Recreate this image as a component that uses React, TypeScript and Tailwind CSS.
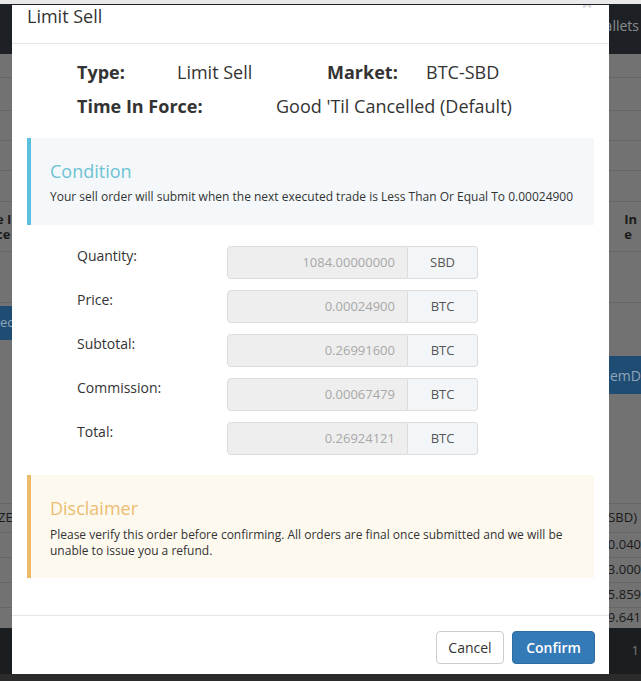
import React from "react";

const rows = [
  { label: "Quantity:", value: "1084.00000000", unit: "SBD" },
  { label: "Price:", value: "0.00024900", unit: "BTC" },
  { label: "Subtotal:", value: "0.26991600", unit: "BTC" },
  { label: "Commission:", value: "0.00067479", unit: "BTC" },
  { label: "Total:", value: "0.26924121", unit: "BTC" },
];

function BackgroundPage() {
  return (
    <div className="flex h-full w-full flex-col bg-[#727272] text-[13px] text-[#1a1a1a]">
      <div className="h-[4px] bg-[#e9e9e9]" />
      <div className="flex h-[51px] items-center justify-end bg-[#1d2126] pr-[2px] text-[14px] text-[#8a8d90]">
        <span className="mt-[-8px]">Wallets</span>
      </div>
      <div className="flex flex-1 flex-col">
        <div className="h-[24px] border-b border-[#666]" />
        <div className="h-[33px] border-b border-[#666]" />
        <div className="h-[30px] border-b border-[#666]" />
        <div className="h-[30px] border-b border-[#666]" />
        <div className="h-[31px] border-b border-[#666]" />
        <div className="flex h-[50px] items-center justify-between border-b border-[#666] font-bold leading-[15px]">
          <div className="ml-[-4px] flex flex-col">
            <span>e I</span>
            <span>ce</span>
          </div>
          <div className="mr-[4px] flex flex-col">
            <span>In</span>
            <span>e</span>
          </div>
        </div>
        <div className="h-[51px] border-b border-[#666]" />
        <div className="flex h-[40px] items-center justify-between">
          <span className="flex h-[34px] w-[14px] items-center overflow-hidden bg-[#1f4c72] text-[#8fa6bb]">ec</span>
        </div>
        <div className="h-[12px]" />
        <div className="flex h-[40px] items-center justify-end">
          <span className="flex h-[38px] w-[34px] items-center overflow-hidden bg-[#1f4c72] pl-[3px] text-[14px] text-[#8fa6bb]">emD</span>
        </div>
        <div className="h-[108px]" />
        <div className="flex h-[30px] items-center justify-between border-y border-[#666]">
          <span className="ml-[-2px]">ZE</span>
          <span className="mr-[4px]">SBD)</span>
        </div>
        <div className="flex h-[25px] items-center justify-end border-b border-[#666]">0.040</div>
        <div className="flex h-[25px] items-center justify-end border-b border-[#666]">3.000</div>
        <div className="flex h-[25px] items-center justify-end border-b border-[#666]">5.859</div>
        <div className="flex flex-1 items-end justify-end">9.641</div>
      </div>
      <div className="flex h-[47px] items-center justify-end bg-[#1b1e21] pr-[2px] text-[#777]">1</div>
      <div className="h-[7px] bg-[#2b2b2b]" />
    </div>
  );
}

export default function App() {
  return (
    <div
      className="relative h-[681px] w-[641px] overflow-hidden"
      style={{ fontFamily: '"Open Sans", "Liberation Sans", sans-serif' }}
    >
      <BackgroundPage />

      {/* Modal */}
      <div className="absolute left-[12px] top-[5px] flex h-[669px] w-[597px] flex-col overflow-hidden bg-white text-[#333]">
        {/* Header */}
        <div className="relative h-[39px] border-b border-[#e5e5e5] pl-[15px]">
          <h4 className="text-[18px] leading-[22px]">Limit Sell</h4>
          <span className="absolute right-[16px] top-[-17px] text-[21px] font-bold text-[#d6d6d6]">×</span>
        </div>

        {/* Body */}
        <div className="flex flex-1 flex-col px-[15px]">
          <div className="mt-[16px] flex items-center pl-[50px] text-[18px] leading-[24px]">
            <span className="w-[100px] font-bold">Type:</span>
            <span className="w-[150px]">Limit Sell</span>
            <span className="w-[99px] font-bold">Market:</span>
            <span>BTC-SBD</span>
          </div>
          <div className="mt-[10px] flex items-center pl-[50px] text-[18px] leading-[24px]">
            <span className="w-[199px] font-bold">Time In Force:</span>
            <span>Good 'Til Cancelled (Default)</span>
          </div>

          {/* Condition */}
          <div className="mt-[20px] h-[87px] border-l-[4px] border-[#5bc0de] bg-[#f4f8fa] pl-[19px] pt-[20px]">
            <h4 className="text-[18px] leading-[26px] text-[#6cc3d3]">Condition</h4>
            <p className="mt-[4px] text-[12px] leading-[17px]">
              Your sell order will submit when the next executed trade is Less Than Or Equal To 0.00024900
            </p>
          </div>

          {/* Form */}
          <div className="mt-[21px] flex flex-col gap-[11px] pl-[50px]">
            {rows.map((r) => (
              <div key={r.label} className="flex h-[33px]">
                <label className="w-[150px] pt-[1px] text-[14px] leading-[18px]">{r.label}</label>
                <div className="flex">
                  <div className="flex w-[181px] items-center justify-end rounded-l-[4px] border border-[#dcdcdc] bg-[#eeeeee] pr-[12px] text-[13px] text-[#a8a8a8]">
                    {r.value}
                  </div>
                  <div className="flex w-[70px] items-center justify-center rounded-r-[4px] border border-l-0 border-[#dcdcdc] bg-[#f3f6f9] text-[13px] text-[#555]">
                    {r.unit}
                  </div>
                </div>
              </div>
            ))}
          </div>

          {/* Disclaimer */}
          <div className="mt-[20px] h-[103px] border-l-[4px] border-[#ebbb6a] bg-[#fdf9ef] pl-[19px] pt-[20px]">
            <h4 className="text-[18px] leading-[26px] text-[#ecbd72]">Disclaimer</h4>
            <p className="mt-[6px] pr-[20px] text-[12px] leading-[16px]">
              Please verify this order before confirming. All orders are final once submitted and we will be unable to issue you a refund.
            </p>
          </div>
        </div>

        {/* Footer */}
        <div className="flex h-[59px] justify-end gap-[8px] border-t border-[#e5e5e5] pr-[14px] pt-[15px]">
          <button className="h-[33px] w-[68px] rounded-[4px] border border-[#ccc] bg-white text-[14px] text-[#333]">
            Cancel
          </button>
          <button className="h-[33px] w-[83px] rounded-[4px] border border-[#2e6da4] bg-[#337ab7] text-[14px] font-semibold text-white">
            Confirm
          </button>
        </div>
      </div>
    </div>
  );
}
